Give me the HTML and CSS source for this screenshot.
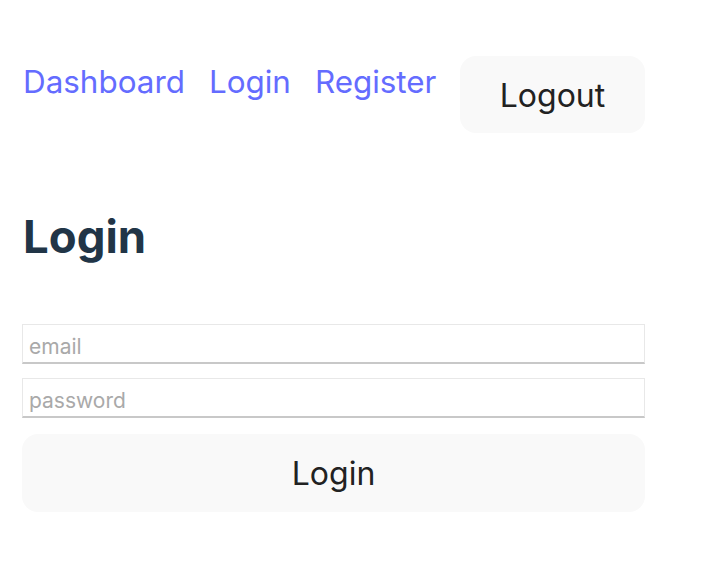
FILE: index.html
```html
<!DOCTYPE html>
<html lang="en">
<head>
<meta charset="utf-8">
<title>Login</title>
<link rel="stylesheet" href="styles.css">
</head>
<body>
<div class="app">
  <nav class="nav">
    <a class="nav-link" href="#">Dashboard</a>
    <a class="nav-link" href="#">Login</a>
    <a class="nav-link" href="#">Register</a>
    <button class="btn btn-logout" type="button">Logout</button>
  </nav>
  <h1 class="title">Login</h1>
  <form class="form">
    <input class="field" type="email" placeholder="email">
    <input class="field" type="password" placeholder="password">
    <button class="btn btn-submit" type="button">Login</button>
  </form>
</div>
</body>
</html>
```

FILE: styles.css
```css
html, body {
  margin: 0;
  padding: 0;
  background: #ffffff;
}
body {
  font-family: Inter, "Noto Sans", sans-serif;
  color: #213547;
}
.app {
  width: 623px;
  padding: 56px 0 0 22px;
}
.nav {
  display: flex;
  align-items: flex-start;
  gap: 23px;
}
.nav-link {
  font-size: 31.4px;
  line-height: 1.21;
  color: #646cff;
  text-decoration: none;
  padding-top: 7px;
  padding-left: 1px;
}
.btn {
  font-family: Inter, "Noto Sans", sans-serif;
  font-size: 32px;
  font-weight: 400;
  line-height: 1.21;
  color: #222222;
  background: #f9f9f9;
  border: 1px solid transparent;
  border-radius: 16px;
  cursor: pointer;
}
.btn-logout {
  width: 185px;
  height: 77px;
  padding-top: 5px;
  margin-left: auto;
}
.title {
  margin: 76px 0 0;
  font-size: 45.5px;
  line-height: 1.21;
  font-weight: 700;
  color: #213547;
  padding-left: 1px;
}
.form {
  display: flex;
  flex-direction: column;
  margin-top: 60px;
}
.field {
  box-sizing: border-box;
  height: 40px;
  margin: 0 0 14px;
  padding: 5px 6px 0;
  font-family: Inter, "Noto Sans", sans-serif;
  font-size: 21px;
  color: #222;
  background: #fff;
  border: 1px solid #e8e8e8;
  border-bottom: 2px solid #c8c8c8;
  border-radius: 0;
  outline: none;
}
.field::placeholder {
  color: #a9a9a9;
}
.btn-submit {
  height: 78px;
  margin-top: 2px;
  padding-top: 4px;
}
```
